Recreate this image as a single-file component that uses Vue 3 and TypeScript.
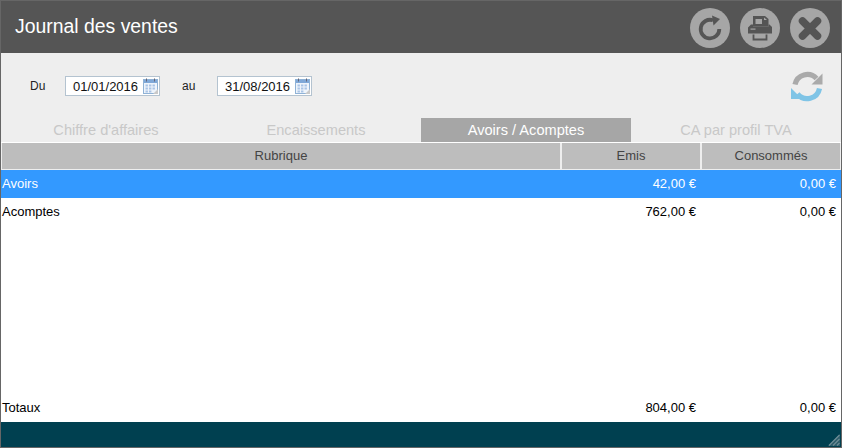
<script setup lang="ts">
interface Row { label: string; emis: string; conso: string; selected?: boolean }
const rows: Row[] = [
  { label: 'Avoirs', emis: '42,00 €', conso: '0,00 €', selected: true },
  { label: 'Acomptes', emis: '762,00 €', conso: '0,00 €' },
]
const tabs = ["Chiffre d'affaires", 'Encaissements', 'Avoirs / Acomptes', 'CA par profil TVA']
const dates = [
  { label: 'Du', value: '01/01/2016' },
  { label: 'au', value: '31/08/2016' },
]
</script>

<template>
  <div class="window">
    <header class="title">
      <h1>Journal des ventes</h1>
      <div class="actions">
        <button class="round" aria-label="Recharger">
          <svg viewBox="0 0 40 40" width="40" height="40">
            <path d="M23 12.3A9.3 9.3 0 1 0 29.3 21" fill="none" stroke="#555" stroke-width="3.8" />
            <path d="M22 7.5L30 11L23.5 17.5Z" fill="#555" />
          </svg>
        </button>
        <button class="round" aria-label="Imprimer">
          <svg viewBox="0 0 40 40" width="40" height="40">
            <path d="M13 8H25L28.5 11V18.5H13Z" fill="#555" />
            <path d="M15.5 11H22V16H15.5Z" fill="#a6a6a6" />
            <path d="M24 9.5L27 12L24 12Z" fill="#a6a6a6" />
            <path d="M8 19.5L11 16.5H13V18.5H28.5V16.5H29.5L32 19V25.5H8Z" fill="#555" />
            <rect x="10.5" y="20.5" width="5" height="1.2" fill="#a6a6a6" />
            <path d="M13.5 26.5V31.5H26.5V26.5" fill="none" stroke="#555" stroke-width="1.8" />
          </svg>
        </button>
        <button class="round" aria-label="Fermer">
          <svg viewBox="0 0 40 40" width="40" height="40">
            <path d="M12.5 13L27.5 28M27.5 13L12.5 28" stroke="#555" stroke-width="7.5" stroke-linecap="round" />
          </svg>
        </button>
      </div>
    </header>

    <section class="filters">
      <template v-for="d in dates" :key="d.label">
        <span class="lbl">{{ d.label }}</span>
        <div class="date">
          <span class="val">{{ d.value }}</span>
          <svg class="cal" viewBox="0 0 15 16" width="15" height="16">
            <rect x="0.5" y="1.5" width="14" height="14" fill="#eef4fb" stroke="#8fb2d6" />
            <rect x="1" y="2" width="13" height="3" fill="#7fa8d8" />
            <rect x="3" y="0.5" width="1" height="3" fill="#667" />
            <rect x="11" y="0.5" width="1" height="3" fill="#667" />
            <g fill="#a9c4e6">
              <rect x="2.5" y="6.5" width="2.4" height="2" />
              <rect x="6" y="6.5" width="2.4" height="2" />
              <rect x="9.5" y="6.5" width="2.4" height="2" />
              <rect x="2.5" y="9.5" width="2.4" height="2" />
              <rect x="6" y="9.5" width="2.4" height="2" />
              <rect x="9.5" y="9.5" width="2.4" height="2" />
              <rect x="2.5" y="12.5" width="2.4" height="2" />
              <rect x="6" y="12.5" width="2.4" height="2" />
            </g>
            <path d="M15 11V16H10Z" fill="#c9c9c9" />
          </svg>
        </div>
      </template>
      <svg class="sync" viewBox="0 0 34 34" width="34" height="34">
        <path d="M5 15.5A12.5 12.5 0 0 1 26.5 9.5" fill="none" stroke="#aaa" stroke-width="5.2" />
        <path d="M32.5 4.5V15.5H21.5Z" fill="#aaa" />
        <path d="M29.5 19.5A12.5 12.5 0 0 1 7.5 25" fill="none" stroke="#7fc4e6" stroke-width="5.2" />
        <path d="M1 19V30H12Z" fill="#7fc4e6" />
      </svg>
    </section>

    <nav class="tabs">
      <div v-for="(t, i) in tabs" :key="t" class="tab" :class="{ active: i === 2 }">{{ t }}</div>
    </nav>

    <div class="thead">
      <div class="c1">Rubrique</div>
      <div class="c2">Emis</div>
      <div class="c3">Consommés</div>
    </div>

    <div class="tbody">
      <div v-for="r in rows" :key="r.label" class="row" :class="{ selected: r.selected }">
        <span class="c1">{{ r.label }}</span>
        <span class="c2">{{ r.emis }}</span>
        <span class="c3">{{ r.conso }}</span>
      </div>
    </div>

    <div class="row total">
      <span class="c1">Totaux</span>
      <span class="c2">804,00 €</span>
      <span class="c3">0,00 €</span>
    </div>

    <footer class="foot">
      <svg class="grip" viewBox="0 0 12 12" width="12" height="12">
        <path d="M12 0V12H0Z" fill="#2d5d6a" />
        <path d="M11.5 1L1 11.5M11.5 5L5 11.5M11.5 9L9 11.5" stroke="#6e8d96" stroke-width="1.2" />
      </svg>
    </footer>
  </div>
</template>

<style>
html, body { margin: 0; background: #fff; }
</style>

<style scoped>
.window {
  box-sizing: border-box;
  width: 842px;
  height: 448px;
  border: 1px solid #666;
  display: flex;
  flex-direction: column;
  font-family: "Liberation Sans", Arial, sans-serif;
  font-size: 13px;
  color: #000;
  background: #fff;
  overflow: hidden;
}
.title {
  height: 52px;
  flex: none;
  background: #555;
  display: flex;
  align-items: center;
  justify-content: space-between;
  padding: 0 11px 0 14px;
}
h1 {
  margin: 0 0 2px;
  font-size: 19.4px;
  font-weight: 400;
  color: #fff;
}
.actions { display: flex; gap: 10px; margin-top: 1px; }
.round {
  width: 40px;
  height: 40px;
  padding: 0;
  border: 0;
  border-radius: 50%;
  background: #a6a6a6;
  display: block;
}
.round svg { display: block; }
.filters {
  height: 65px;
  flex: none;
  background: #eee;
  display: flex;
  align-items: center;
  padding: 0 0 0 28px;
}
.lbl {
  box-sizing: border-box;
  width: 36px;
  padding-left: 1px;
  margin-top: 1px;
  font-size: 12px;
  color: #222;
}
.date {
  box-sizing: border-box;
  width: 95px;
  height: 20px;
  margin-right: 21px;
  background: #fff;
  border: 1px solid #b4c3d0;
  display: flex;
  align-items: center;
  justify-content: space-between;
  padding-left: 7px;
  color: #111;
}
.val { margin-top: 1px; }
.cal { margin-right: 1px; }
.sync { margin-left: auto; margin-right: 17px; }
.tabs { display: flex; height: 24px; flex: none; background: #eee; }
.tab {
  width: 210px;
  text-align: center;
  line-height: 24px;
  font-size: 14.6px;
  color: #c8c8c8;
}
.active { background: #a6a6a6; color: #fff; }
.thead {
  display: flex;
  flex: none;
  height: 27px;
  margin-top: 1px;
  background: #eee;
  border-bottom: 1px solid #eee;
  box-sizing: border-box;
  color: #444;
  line-height: 26px;
  text-align: center;
  padding-left: 1px;
}
.thead > div { background: #bdbdbd; height: 26px; }
.thead .c1 { width: 558px; }
.thead .c2 { width: 138px; margin-left: 2px; }
.thead .c3 { width: 138px; margin-left: 2px; }
.tbody { flex: 1; min-height: 0; }
.row {
  display: flex;
  height: 28px;
  line-height: 28px;
}
.row .c1 { width: 560px; padding-left: 1px; box-sizing: border-box; }
.row .c2 { width: 135px; text-align: right; }
.row .c3 { width: 140px; text-align: right; }
.selected { background: #3399ff; color: #fff; }
.total { flex: none; }
.foot {
  height: 25px;
  flex: none;
  background: #004050;
  position: relative;
}
.grip { position: absolute; right: 1px; bottom: 1px; }
</style>
